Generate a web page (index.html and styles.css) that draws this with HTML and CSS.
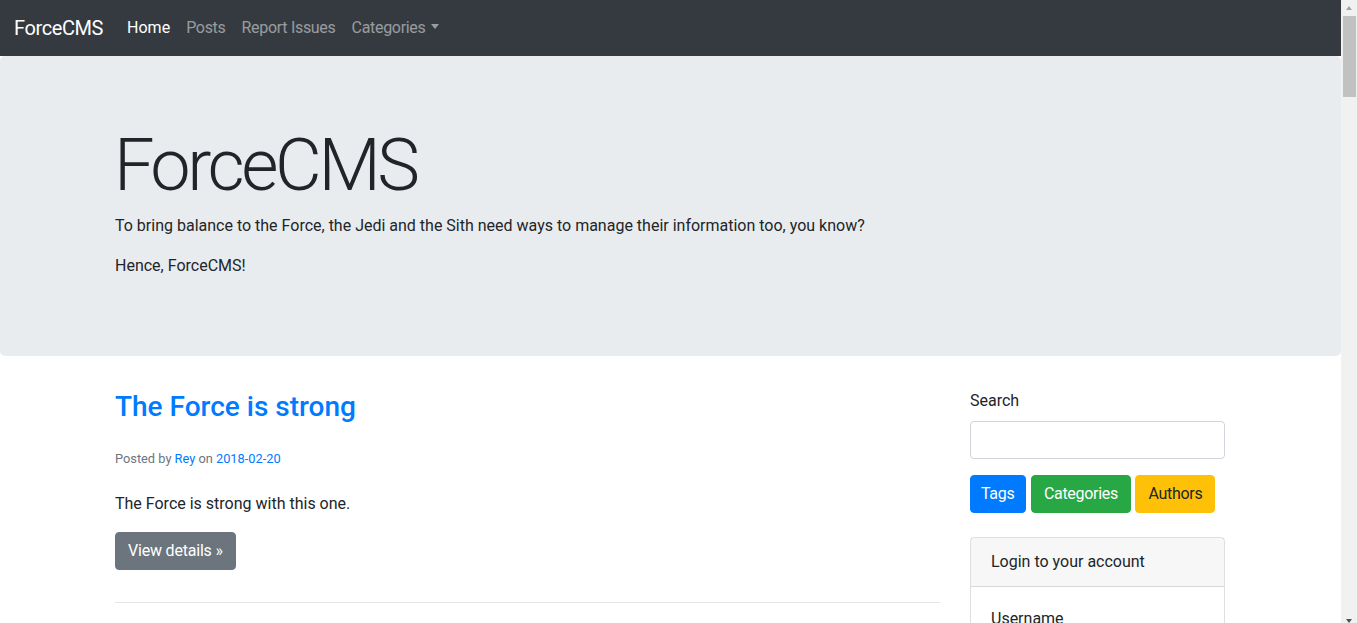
FILE: index.html
```html
<!DOCTYPE html>
<html lang="en">
<head>
<meta charset="utf-8">
<title>ForceCMS</title>
<link rel="stylesheet" href="styles.css">
</head>
<body>
<div class="window">
  <div class="viewport">
    <nav class="navbar">
      <a class="brand" href="#">ForceCMS</a>
      <ul class="nav">
        <li><a class="nav-link active" href="#">Home</a></li>
        <li><a class="nav-link" href="#">Posts</a></li>
        <li><a class="nav-link" href="#">Report Issues</a></li>
        <li><a class="nav-link dropdown-toggle" href="#">Categories</a></li>
      </ul>
    </nav>

    <div class="jumbotron">
      <div class="container">
        <h1 class="display">ForceCMS</h1>
        <p>To bring balance to the Force, the Jedi and the Sith need ways to manage their information too, you know?</p>
        <p class="last">Hence, ForceCMS!</p>
      </div>
    </div>

    <div class="container">
      <div class="row">
        <div class="col-main">
          <article class="post">
            <h2 class="post-title"><a href="#">The Force is strong</a></h2>
            <div class="post-meta">Posted by <a href="#">Rey</a> on <a href="#">2018-02-20</a></div>
            <p class="post-body">The Force is strong with this one.</p>
            <a class="btn btn-secondary" href="#">View details &raquo;</a>
          </article>
          <hr class="divider">
        </div>
        <aside class="col-side">
          <div class="form-group">
            <label class="label" for="search">Search</label>
            <input class="input" id="search" type="text">
          </div>
          <div class="btn-row">
            <a class="btn btn-primary" href="#">Tags</a>
            <a class="btn btn-success" href="#">Categories</a>
            <a class="btn btn-warning" href="#">Authors</a>
          </div>
          <div class="card">
            <div class="card-header">Login to your account</div>
            <div class="card-body">
              <label class="label">Username</label>
            </div>
          </div>
        </aside>
      </div>
    </div>
  </div>
  <div class="scrollbar">
    <div class="arrow arrow-up"></div>
    <div class="thumb"></div>
    <div class="track-fill"></div>
    <div class="arrow arrow-down"></div>
  </div>
</div>
</body>
</html>
```
FILE: styles.css
```css
* { box-sizing: border-box; }

html, body {
  margin: 0;
  height: 623px;
  overflow: hidden;
}

body {
  font-family: Roboto, "Liberation Sans", Arial, sans-serif;
  font-size: 16px;
  line-height: 1.5;
  color: #212529;
  background: #fff;
}

a { text-decoration: none; }

.window {
  display: flex;
  height: 623px;
}

.viewport {
  flex: 1 1 auto;
  min-width: 0;
  overflow: hidden;
}

/* Navbar */
.navbar {
  display: flex;
  align-items: center;
  height: 56px;
  padding: 8px 16px 8px 14px;
  background: #343a40;
}

.brand {
  font-size: 20px;
  line-height: 30px;
  letter-spacing: -0.4px;
  color: #fff;
  margin-right: 16px;
}

.nav {
  display: flex;
  list-style: none;
  margin: 0;
  padding: 0;
}

.nav-link {
  display: block;
  padding: 8px 8px;
  color: rgba(255, 255, 255, 0.5);
  line-height: 24px;
  letter-spacing: -0.3px;
}

.nav-link.active { color: #fff; letter-spacing: 0; }

.dropdown-toggle::after {
  content: "";
  display: inline-block;
  margin-left: 5px;
  vertical-align: 4px;
  border-top: 5px solid;
  border-left: 4.5px solid transparent;
  border-right: 4.5px solid transparent;
}

/* Jumbotron */
.jumbotron {
  background: #e9ecef;
  padding: 64px 0;
  margin-bottom: 32px;
  border-radius: 5px;
}

.container {
  width: 1140px;
  margin: 0 auto;
  padding: 0 15px 0 14.5px;
}

.display {
  font-size: 72px;
  font-weight: 300;
  line-height: 1.2;
  letter-spacing: -3.4px;
  margin: 3px 0 5px -1px;
}

.jumbotron p {
  margin: 0 0 16px;
}

.jumbotron p.last { margin-bottom: 14px; }

/* Content */
.row {
  display: flex;
  margin: 0 -15px;
}

.col-main {
  flex: 0 0 855px;
  padding: 0 15px;
}

.col-side {
  flex: 0 0 285px;
  padding: 0 15px;
}

.post-title {
  font-size: 28px;
  font-weight: 500;
  line-height: 1.2;
  margin: 2px 0 25px;
}

.post-title a { color: #007bff; }

.post-meta {
  font-size: 12.8px;
  line-height: 19.2px;
  color: #6c757d;
}

.post-meta a { color: #007bff; }

.post-body {
  margin: 24px 0 16px;
}

.btn {
  display: inline-block;
  padding: 6px 12px;
  font-size: 16px;
  line-height: 24px;
  border: 1px solid transparent;
  border-radius: 4px;
  color: #fff;
}

.btn-secondary { background: #6c757d; border-color: #6c757d; letter-spacing: -0.2px; }
.btn-primary { background: #007bff; border-color: #007bff; }
.btn-success { background: #28a745; border-color: #28a745; }
.btn-warning { background: #ffc107; border-color: #ffc107; color: #212529; }

.divider {
  border: 0;
  border-top: 1px solid rgba(0, 0, 0, 0.1);
  margin: 32px 0 0;
}

/* Sidebar */
.form-group {
  margin-top: 1px;
  margin-bottom: 16px;
}

.label {
  display: block;
  margin-bottom: 8px;
}

.input {
  display: block;
  width: 100%;
  height: 38px;
  border: 1px solid #ced4da;
  border-radius: 4px;
  background: #fff;
  font: inherit;
}

.btn-row {
  display: flex;
  gap: 4.5px;
}

.btn-row .btn {
  letter-spacing: -0.3px;
}

.btn-row .btn-primary {
  padding: 6px 11px 6px 10px;
}

.card {
  margin-top: 24px;
  border: 1px solid rgba(0, 0, 0, 0.125);
  border-radius: 4px;
}

.card-header {
  padding: 12px 20px;
  background: rgba(0, 0, 0, 0.03);
  border-bottom: 1px solid rgba(0, 0, 0, 0.125);
}

.card-body {
  padding: 20px;
}

/* Fake scrollbar */
.scrollbar {
  flex: 0 0 16px;
  display: flex;
  flex-direction: column;
  background: #f1f1f1;
}

.arrow {
  flex: 0 0 16px;
  display: flex;
  justify-content: center;
  align-items: center;
}

.arrow::before {
  content: "";
  border-left: 3.5px solid transparent;
  border-right: 3.5px solid transparent;
}

.arrow-up::before { border-bottom: 4px solid #a3a3a3; margin-bottom: 1px; }
.arrow-down::before { border-top: 4px solid #505050; margin-top: 14px; }

.arrow-down { align-items: flex-start; }

.thumb {
  flex: 0 0 81px;
  margin: 0 1px 0 2px;
  background: #c1c1c1;
}

.track-fill { flex: 1 1 auto; }
```
